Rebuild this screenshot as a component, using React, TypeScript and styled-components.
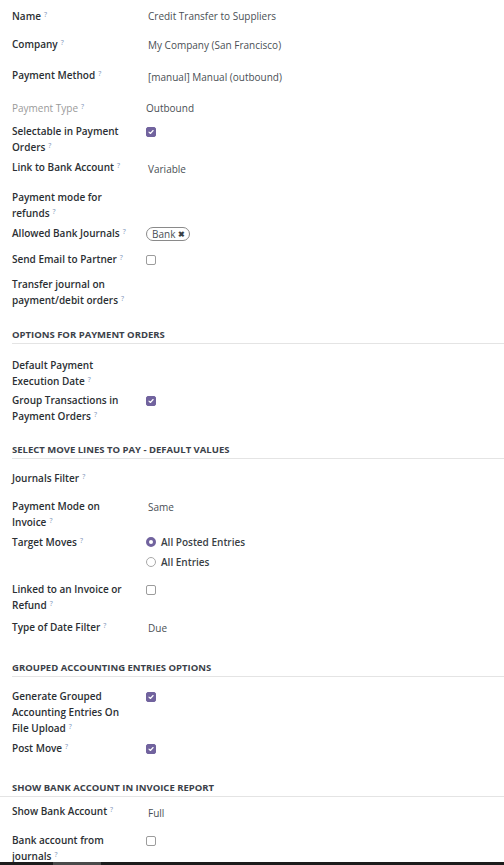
import styled, { createGlobalStyle } from "styled-components";

const GlobalStyle = createGlobalStyle`
  html, body {
    margin: 0;
    padding: 0;
    background: #ffffff;
  }
  body {
    font-family: "Open Sans", "Noto Sans", sans-serif;
    font-size: 10px;
    color: #212529;
  }
`;

const Page = styled.div`
  display: flex;
  flex-direction: column;
  height: 865px;
  overflow: hidden;
`;

const Sheet = styled.div`
  flex: 1;
  overflow: hidden;
  padding: 8px 0 0 12px;
`;

const Row = styled.div<{ $h: number }>`
  display: grid;
  grid-template-columns: 134px 1fr;
  align-items: start;
  min-height: ${({ $h }) => $h}px;
`;

const Label = styled.div<{ $muted?: boolean }>`
  padding-right: 14px;
  line-height: 16px;
  font-weight: ${({ $muted }) => ($muted ? 400 : 600)};
  color: ${({ $muted }) => ($muted ? "#9a9a9a" : "#2b2f33")};
`;

const Help = styled.sup`
  font-size: 7px;
  font-weight: 400;
  color: #7d93b8;
  margin-left: 3px;
  vertical-align: 3px;
  line-height: 1;
`;

const Value = styled.div<{ $dy?: number; $dx?: number }>`
  line-height: 16px;
  color: #4a4f55;
  padding-top: ${({ $dy }) => $dy ?? 0}px;
  padding-left: ${({ $dx }) => $dx ?? 0}px;
`;

const Box = styled.span<{ $checked?: boolean }>`
  display: inline-flex;
  align-items: center;
  justify-content: center;
  box-sizing: border-box;
  width: 10px;
  height: 10px;
  margin-top: 4px;
  border-radius: 2px;
  border: 1px solid ${({ $checked }) => ($checked ? "#71639e" : "#9c9c9c")};
  background: ${({ $checked }) => ($checked ? "#71639e" : "#ffffff")};
`;

const RadioList = styled.div`
  display: flex;
  flex-direction: column;
  gap: 4px;
`;

const RadioItem = styled.div`
  display: flex;
  align-items: center;
  gap: 5px;
  line-height: 16px;
  color: #3a3f45;
  font-weight: 600;
`;

const RadioDot = styled.span<{ $checked?: boolean }>`
  box-sizing: border-box;
  width: 10px;
  height: 10px;
  border-radius: 50%;
  border: ${({ $checked }) => ($checked ? "3px solid #71639e" : "1px solid #a8a8a8")};
  background: #ffffff;
`;

const Tag = styled.span`
  display: inline-flex;
  align-items: center;
  gap: 3px;
  height: 14px;
  box-sizing: border-box;
  margin-top: 2px;
  padding: 0 4px 0 5px;
  border: 1px solid #8a8a8a;
  border-radius: 8px;
  color: #4a4f55;
  font-size: 10px;
  line-height: 12px;
`;

const TagClose = styled.span`
  font-size: 8px;
  font-weight: 700;
  color: #3a3f45;
`;

const SectionTitle = styled.div<{ $bleed?: boolean; $after: number }>`
  margin: 19px 0 ${({ $after }) => $after}px ${({ $bleed }) => ($bleed ? "-12px" : "0")};
  padding-left: ${({ $bleed }) => ($bleed ? "12px" : "0")};
  padding-bottom: 1px;
  border-bottom: 1px solid #e4e4e4;
  font-size: 9.5px;
  line-height: 14px;
  font-weight: 700;
  color: #3b4149;
  text-transform: uppercase;
`;

const ScrollBar = styled.div`
  height: 3px;
  background: #1c1c1c;
  display: flex;
`;

const ScrollThumb = styled.div`
  margin-left: 53px;
  width: 48px;
  background: #4a4a4a;
`;

function Check({ checked }: { checked?: boolean }) {
  return (
    <Box $checked={checked}>
      {checked && (
        <svg width="6" height="6" viewBox="0 0 8 8">
          <path d="M1.3 4.2 L3.2 6 L6.8 2" fill="none" stroke="#fff" strokeWidth="1.5" strokeLinecap="round" strokeLinejoin="round" />
        </svg>
      )}
    </Box>
  );
}

function Field({
  label,
  h,
  muted,
  children,
}: {
  label: React.ReactNode;
  h: number;
  muted?: boolean;
  children?: React.ReactNode;
}) {
  return (
    <Row $h={h}>
      <Label $muted={muted}>
        {label}
        <Help>?</Help>
      </Label>
      <div>{children}</div>
    </Row>
  );
}

export default function App() {
  return (
    <Page>
      <GlobalStyle />
      <Sheet>
        <Field label="Name" h={28}>
          <Value $dx={2}>Credit Transfer to Suppliers</Value>
        </Field>
        <Field label="Company" h={31}>
          <Value $dx={2} $dy={1}>My Company (San Francisco)</Value>
        </Field>
        <Field label="Payment Method" h={33}>
          <Value $dx={2} $dy={2}>[manual] Manual (outbound)</Value>
        </Field>
        <Field label="Payment Type" h={23} muted>
          <Value>Outbound</Value>
        </Field>
        <Field label="Selectable in Payment Orders" h={36}>
          <Check checked />
        </Field>
        <Field label="Link to Bank Account" h={30}>
          <Value $dx={2} $dy={2}>Variable</Value>
        </Field>
        <Field label="Payment mode for refunds" h={36} />
        <Field label="Allowed Bank Journals" h={26}>
          <Tag>
            Bank<TagClose>✖</TagClose>
          </Tag>
        </Field>
        <Field label="Send Email to Partner" h={25}>
          <Check />
        </Field>
        <Field label="Transfer journal on payment/debit orders" h={33} />

        <SectionTitle $after={13}>Options for Payment Orders</SectionTitle>
        <Field label="Default Payment Execution Date" h={35} />
        <Field label="Group Transactions in Payment Orders" h={31}>
          <Check checked />
        </Field>

        <SectionTitle $after={11}>Select Move Lines to Pay - Default Values</SectionTitle>
        <Field label="Journals Filter" h={28} />
        <Field label="Payment Mode on Invoice" h={36}>
          <Value $dx={2} $dy={1}>Same</Value>
        </Field>
        <Field label="Target Moves" h={47}>
          <RadioList>
            <RadioItem>
              <RadioDot $checked />
              All Posted Entries
            </RadioItem>
            <RadioItem>
              <RadioDot />
              All Entries
            </RadioItem>
          </RadioList>
        </Field>
        <Field label="Linked to an Invoice or Refund" h={38}>
          <Check />
        </Field>
        <Field label="Type of Date Filter" h={23}>
          <Value $dx={2} $dy={1}>Due</Value>
        </Field>

        <SectionTitle $after={11}>Grouped Accounting Entries Options</SectionTitle>
        <Field label="Generate Grouped Accounting Entries On File Upload" h={52}>
          <Check checked />
        </Field>
        <Field label="Post Move" h={22}>
          <Check checked />
        </Field>

        <SectionTitle $bleed $after={6}>Show Bank Account in Invoice Report</SectionTitle>
        <Field label="Show Bank Account" h={29}>
          <Value $dx={2} $dy={2}>Full</Value>
        </Field>
        <Field label="Bank account from journals" h={32}>
          <Check />
        </Field>
      </Sheet>
      <ScrollBar>
        <ScrollThumb />
      </ScrollBar>
    </Page>
  );
}
